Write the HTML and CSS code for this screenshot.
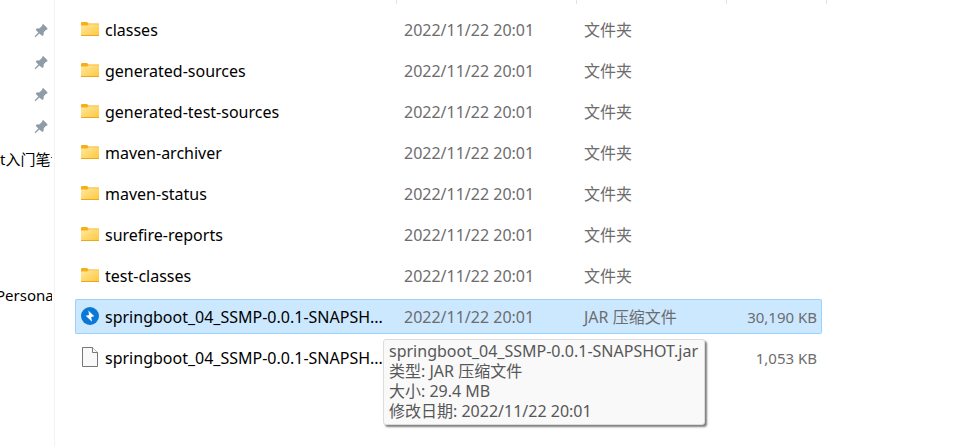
FILE: index.html
```html
<!DOCTYPE html>
<html lang="zh-CN">
<head>
  <meta charset="UTF-8">
  <title>target</title>
  <link rel="stylesheet" href="styles.css">
</head>
<body>
  <!-- 图标 -->
  <svg class="sprite" aria-hidden="true">
    <defs>
      <linearGradient id="folderFill" x1="0" y1="0" x2="1" y2="1">
        <stop offset="0" stop-color="#ffe9a0"/>
        <stop offset="1" stop-color="#fdc73c"/>
      </linearGradient>
    </defs>
    <symbol id="pin" viewBox="0 0 14 14">
      <path d="M8.3.6 9.4.3 13.5 4.2 13.2 5.6 11.8 5.9 9.8 8.2 9.5 11 8.2 12 5.4 9.5 1.6 13 .7 13 .9 12.1 4.3 8.4 1.7 5.8 2.7 4.4 5.6 4.2 8 2.1Z" fill="#8f9ba5"/>
    </symbol>
    <symbol id="folder" viewBox="0 0 18 14">
      <path d="M0 1.2Q0 0 1.2 0H6L7.6 1.4H18V6H0Z" fill="#f6af17"/>
      <path d="M0 3.6H6.2L7.8 2.2H18V14H0Z" fill="url(#folderFill)"/>
      <path d="M0 13.5H18" stroke="#eba91e"/>
    </symbol>
    <symbol id="jar" viewBox="0 0 20 20">
      <circle cx="10" cy="10" r="10" fill="#0a78d6"/>
      <path d="M8.2 4 14.8 10.4 11.3 11 12.3 16.4 5.2 9.7 8.9 9Z" fill="#fff"/>
    </symbol>
    <symbol id="file" viewBox="0 0 16 20">
      <path d="M.5.5H10.5L15.5 5.5V19.5H.5Z" fill="#f9f9f9" stroke="#777"/>
      <path d="M10.5.5V5.5H15.5" fill="#fff" stroke="#777"/>
    </symbol>
  </svg>

  <div class="explorer">
    <nav class="sidebar">
      <ul class="quick-access">
        <li class="pinned"><svg class="pin"><use href="#pin"/></svg></li>
        <li class="pinned"><svg class="pin"><use href="#pin"/></svg></li>
        <li class="pinned"><svg class="pin"><use href="#pin"/></svg></li>
        <li class="pinned"><svg class="pin"><use href="#pin"/></svg></li>
        <li><span>t入门笔记</span></li>
      </ul>
      <ul class="drives">
        <li><span>Personal</span></li>
      </ul>
    </nav>

    <main class="content">
      <table class="files">
        <thead>
          <tr>
            <th class="col-name"></th>
            <th class="col-date"></th>
            <th class="col-type"></th>
            <th class="col-size"></th>
            <th class="col-end"></th>
          </tr>
        </thead>
        <tbody>
          <tr>
            <td><div class="name"><svg class="icon folder"><use href="#folder"/></svg><span>classes</span></div></td>
            <td>2022/11/22 20:01</td>
            <td>文件夹</td>
            <td class="size"></td>
          </tr>
          <tr>
            <td><div class="name"><svg class="icon folder"><use href="#folder"/></svg><span>generated-sources</span></div></td>
            <td>2022/11/22 20:01</td>
            <td>文件夹</td>
            <td class="size"></td>
          </tr>
          <tr>
            <td><div class="name"><svg class="icon folder"><use href="#folder"/></svg><span>generated-test-sources</span></div></td>
            <td>2022/11/22 20:01</td>
            <td>文件夹</td>
            <td class="size"></td>
          </tr>
          <tr>
            <td><div class="name"><svg class="icon folder"><use href="#folder"/></svg><span>maven-archiver</span></div></td>
            <td>2022/11/22 20:01</td>
            <td>文件夹</td>
            <td class="size"></td>
          </tr>
          <tr>
            <td><div class="name"><svg class="icon folder"><use href="#folder"/></svg><span>maven-status</span></div></td>
            <td>2022/11/22 20:01</td>
            <td>文件夹</td>
            <td class="size"></td>
          </tr>
          <tr>
            <td><div class="name"><svg class="icon folder"><use href="#folder"/></svg><span>surefire-reports</span></div></td>
            <td>2022/11/22 20:01</td>
            <td>文件夹</td>
            <td class="size"></td>
          </tr>
          <tr>
            <td><div class="name"><svg class="icon folder"><use href="#folder"/></svg><span>test-classes</span></div></td>
            <td>2022/11/22 20:01</td>
            <td>文件夹</td>
            <td class="size"></td>
          </tr>
          <tr class="selected">
            <td>
              <div class="name"><svg class="icon jar"><use href="#jar"/></svg><span>springboot_04_SSMP-0.0.1-SNAPSH...</span></div>
              <div class="tooltip" role="tooltip">
                <div>springboot_04_SSMP-0.0.1-SNAPSHOT.jar</div>
                <div>类型: JAR 压缩文件</div>
                <div>大小: 29.4 MB</div>
                <div>修改日期: 2022/11/22 20:01</div>
              </div>
            </td>
            <td>2022/11/22 20:01</td>
            <td>JAR 压缩文件</td>
            <td class="size">30,190 KB</td>
          </tr>
          <tr>
            <td><div class="name"><svg class="icon file"><use href="#file"/></svg><span>springboot_04_SSMP-0.0.1-SNAPSH...</span></div></td>
            <td></td>
            <td></td>
            <td class="size">1,053 KB</td>
          </tr>
        </tbody>
      </table>
    </main>
  </div>
</body>
</html>
```
FILE: styles.css
```css
* {
  box-sizing: border-box;
}

body {
  margin: 0;
  background: #fff;
  color: #000;
  font-family: "Noto Sans", "Noto Sans CJK SC", sans-serif;
  font-size: 16px;
  line-height: 20px;
  overflow: hidden;
}

.sprite {
  position: absolute;
  width: 0;
  height: 0;
}

.explorer {
  display: flex;
  min-height: 100vh;
}

/* 左侧导航 */
.sidebar {
  flex: none;
  width: 55px;
  padding: 15px 2px 0 0;
  border-right: 1px solid #f3f3f3;
}

.sidebar ul {
  margin: 0;
  padding: 0;
  list-style: none;
}

.sidebar li {
  display: flex;
  align-items: center;
  height: 32px;
  overflow: hidden;
  white-space: nowrap;
  font-size: 15px;
}

.sidebar .pinned {
  justify-content: flex-end;
  padding-right: 4px;
}

.pin {
  width: 14px;
  height: 14px;
}

.sidebar .drives {
  margin-top: 104px;
}

.drives span {
  margin-left: -4px;
}

/* 文件列表 */
.content {
  flex: 1;
  min-width: 0;
  padding-left: 20px;
}

.files {
  width: 752px;
  margin-top: -6px;
  table-layout: fixed;
  border-collapse: separate;
  border-spacing: 0 6px;
}

.files th {
  height: 6px;
  padding: 0;
  background: linear-gradient(#e2e2e2, #e2e2e2) right top / 1px 4px no-repeat;
}

.col-name { width: 322px; }
.col-date { width: 180px; }
.col-type { width: 150px; }
.col-size { width: 95px; }
.col-end { width: 5px; }

.files th.col-size {
  background: none;
}

.files td {
  height: 35px;
  padding: 0 0 0 7px;
  border: 1px solid transparent;
  border-width: 1px 0;
  color: #6d6d6d;
  white-space: nowrap;
}

.files td:first-child {
  position: relative;
  padding-left: 5px;
  border-left-width: 1px;
  color: #000;
}

.files td.size {
  padding: 0 4px 0 0;
  border-right-width: 1px;
  font-size: 15px;
  text-align: right;
}

.files .selected td {
  background: #cce8ff;
  border-color: #99d1ff;
}

.selected td:first-child {
  border-radius: 2px 0 0 2px;
}

.selected td.size {
  border-radius: 0 2px 2px 0;
}

.name {
  display: flex;
  align-items: center;
  gap: 6px;
}

.icon {
  flex: none;
  width: 18px;
}

.folder {
  height: 14px;
  margin-bottom: 2px;
}

.jar,
.file {
  height: 20px;
  margin-bottom: 2px;
}

/* 悬停提示 */
.tooltip {
  position: absolute;
  z-index: 1;
  top: 39px;
  left: 307px;
  padding: 1px 6px 3px 5px;
  background: #f9f9f9;
  border: 1px solid #dcdcdc;
  border-radius: 3px;
  box-shadow: 2px 2px 2px rgba(0, 0, 0, 0.5);
  color: #575757;
}
```
